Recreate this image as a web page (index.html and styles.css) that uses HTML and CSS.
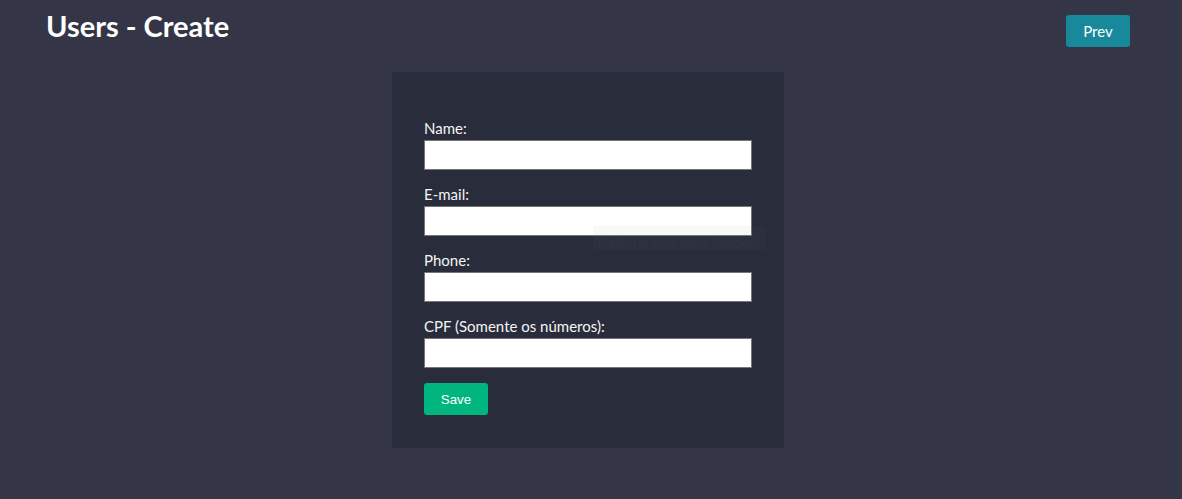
FILE: index.html
```html
<!DOCTYPE html>
<html lang="pt-BR">
<head>
<meta charset="utf-8">
<title>Users - Create</title>
<link rel="stylesheet" href="styles.css">
</head>
<body>
<div class="page">
  <header class="header">
    <h1 class="title">Users - Create</h1>
    <button class="btn-prev" type="button">Prev</button>
  </header>
  <main class="main">
    <form class="card">
      <div class="group">
        <label class="label" for="name">Name:</label>
        <input class="input" id="name" type="text">
      </div>
      <div class="group">
        <label class="label" for="email">E-mail:</label>
        <input class="input" id="email" type="text">
      </div>
      <div class="group">
        <label class="label" for="phone">Phone:</label>
        <input class="input" id="phone" type="text">
      </div>
      <div class="group">
        <label class="label" for="cpf">CPF (Somente os números):</label>
        <input class="input" id="cpf" type="text">
      </div>
      <button class="btn-save" type="button">Save</button>
      <div class="ghost-tip">Capturar uma nova imagem</div>
    </form>
  </main>
</div>
</body>
</html>
```
FILE: styles.css
```css
html, body {
  margin: 0;
  padding: 0;
  background: #343647;
  height: 100%;
}

.page {
  padding: 0 52px 0 46px;
  font-family: Lato, "Liberation Sans", sans-serif;
  color: #f2f2f2;
}

.header {
  display: flex;
  justify-content: space-between;
  align-items: flex-start;
}

.title {
  margin: 9px 0 0;
  font-size: 29px;
  line-height: 34px;
  font-weight: 700;
  color: #ffffff;
}

.btn-prev {
  margin-top: 15px;
  width: 64px;
  height: 32px;
  border: 0;
  border-radius: 3px;
  background: #17899a;
  color: #ffffff;
  font-family: Lato, "Liberation Sans", sans-serif;
  font-size: 15px;
  padding: 0;
}

.main {
  display: flex;
  justify-content: center;
  padding-top: 25px;
}

.card {
  position: relative;
  width: 328px;
  height: 329px;
  padding: 47px 32px 0;
  background: #292c3a;
}

.group {
  margin-bottom: 15px;
}

.label {
  display: block;
  font-size: 15px;
  line-height: 18px;
  margin-bottom: 3px;
  color: #f4f4f4;
}

.input {
  display: block;
  box-sizing: border-box;
  width: 328px;
  height: 30px;
  margin: 0;
  border: 1px solid #767676;
  border-radius: 0;
  background: #ffffff;
}

.btn-save {
  display: block;
  margin-top: 2px;
  width: 64px;
  height: 32px;
  border: 0;
  border-radius: 3px;
  background: #00b67e;
  color: #ffffff;
  font-family: Arial, "Liberation Sans", sans-serif;
  font-size: 13.333px;
  padding: 0;
}

.ghost-tip {
  position: absolute;
  left: 201px;
  top: 154px;
  width: 172px;
  height: 24px;
  padding: 7px 0 0 5px;
  box-sizing: border-box;
  background: rgba(110, 110, 120, 0.05);
  color: rgba(130, 130, 140, 0.08);
  font-family: "Liberation Sans", Arial, sans-serif;
  font-size: 13px;
  line-height: 20px;
  white-space: nowrap;
  overflow: hidden;
  pointer-events: none;
}
```
